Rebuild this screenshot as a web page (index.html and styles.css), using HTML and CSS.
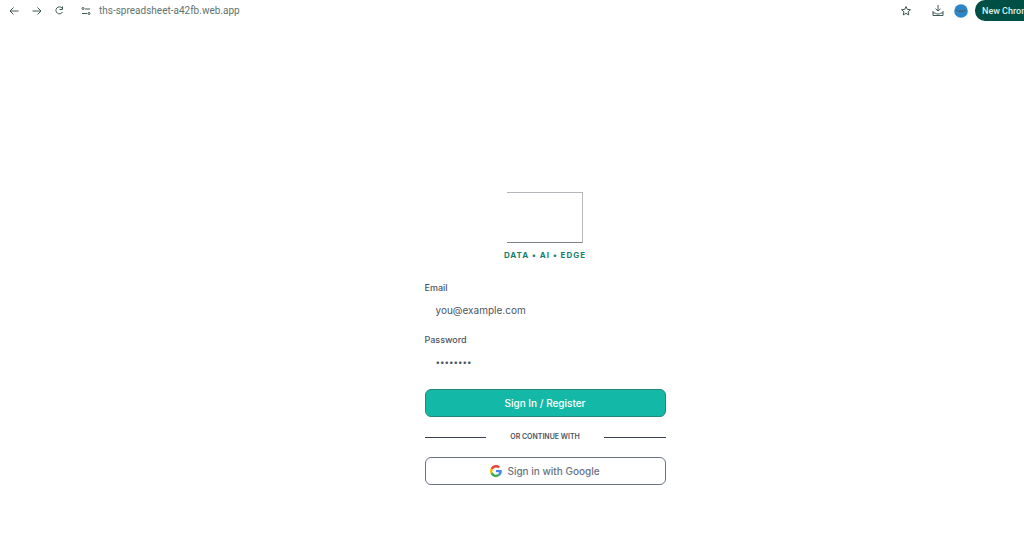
FILE: index.html
```html
<!DOCTYPE html>
<html lang="en">
<head>
    <meta charset="UTF-8">
    <meta name="viewport" content="width=device-width, initial-scale=1.0">
    <title>Sign In</title>
    <link rel="stylesheet" href="styles.css">
</head>
<body>
    <header class="toolbar">
        <div class="nav-buttons">
            <button type="button" class="icon-btn" aria-label="Back">
                <svg viewBox="0 0 12 12"><path d="M10.5 6H2M5.5 2.5L2 6l3.5 3.5"/></svg>
            </button>
            <button type="button" class="icon-btn" aria-label="Forward">
                <svg viewBox="0 0 12 12"><path d="M1.5 6H10M6.5 2.5L10 6l-3.5 3.5"/></svg>
            </button>
            <button type="button" class="icon-btn" aria-label="Reload">
                <svg viewBox="0 0 12 12"><path d="M8 3A3.500 3.500 0 1 0 8.500 7M8.500 1.500v3H5.500"/></svg>
            </button>
        </div>
        <div class="address-bar">
            <button type="button" class="icon-btn" aria-label="Site information">
                <svg viewBox="0 0 12 12"><path d="M5 4h5M2 8.500h5"/><circle cx="3" cy="3.500" r="1"/><circle cx="9" cy="8.500" r="1"/></svg>
            </button>
            <input type="text" class="url" aria-label="Address" value="ths-spreadsheet-a42fb.web.app">
        </div>
        <div class="toolbar-actions">
            <button type="button" class="icon-btn" aria-label="Bookmark">
                <svg viewBox="0 0 12 12"><path d="M6 1.500l1.300 2.900 3.200.3-2.400 2.100.7 3.200L6 8.300 3.200 10l.7-3.200-2.400-2.100 3.200-.3z"/></svg>
            </button>
            <button type="button" class="icon-btn" aria-label="Downloads">
                <svg viewBox="0 0 12 12"><path d="M6 0v6M3.500 3.700L6 6l2.500-2.300M1 6v4.500h10V6M1 8h2.500l1 1h3l1-1H11"/></svg>
            </button>
            <button type="button" class="avatar" aria-label="Profile">
                <svg viewBox="0 0 14 14"><circle cx="7" cy="7" r="6.800" fill="#2b86c9"/><path d="M2 6.500h2M5 6.500h2M8 6.500h1M10 6.500h2M4 7.500h6" stroke="#4b6172"/></svg>
            </button>
            <button type="button" class="update-btn">New Chrome</button>
        </div>
    </header>

    <main class="page">
        <div class="login">
            <div class="logo"></div>
            <p class="tagline">DATA • AI • EDGE</p>

            <form class="login-form">
                <label for="email">Email</label>
                <input type="email" id="email" placeholder="you@example.com">

                <label for="password">Password</label>
                <input type="password" id="password" placeholder="••••••••">

                <button type="submit" class="btn btn-primary">Sign In / Register</button>
            </form>

            <div class="divider"><span>OR CONTINUE WITH</span></div>

            <button type="button" class="btn btn-google">
                <svg class="google-icon" viewBox="0 0 48 48">
                    <path fill="#EA4335" d="M24 9.5c3.5 0 6.7 1.2 9.2 3.6l6.9-6.9C35.9 2.4 30.5 0 24 0 14.6 0 6.5 5.4 2.6 13.2l8 6.2C12.4 13.7 17.7 9.5 24 9.5z"/>
                    <path fill="#4285F4" d="M47 24.6c0-1.6-.2-3.1-.4-4.6H24v9h12.9c-.6 3-2.3 5.5-4.8 7.2l7.7 6C44.4 38 47 31.8 47 24.6z"/>
                    <path fill="#FBBC05" d="M10.5 28.6c-.5-1.5-.8-3-.8-4.6s.3-3.1.8-4.6l-7.9-6.2C.9 16.5 0 20.1 0 24s.9 7.5 2.6 10.8z"/>
                    <path fill="#34A853" d="M24 48c6.5 0 11.9-2.1 15.9-5.8l-7.7-6c-2.2 1.5-4.9 2.3-8.200 2.300-6.300 0-11.600-4.200-13.500-9.900l-7.900 6.200C6.500 42.600 14.600 48 24 48z"/>
                </svg>
                Sign in with Google
            </button>
        </div>
    </main>
</body>
</html>
```
FILE: styles.css
```css
:root {
    --primary-color: #14b8a6;
    --toolbar-color: #3f5853;
    --text-color: #4b5563;
    --line-color: #374151;
}

* {
    box-sizing: border-box;
}

body {
    font-family: Inter, "Liberation Sans", sans-serif;
    background: #fff;
    color: var(--text-color);
    margin: 0;
    overflow-x: hidden;
}

button,
input {
    font-family: inherit;
    border: none;
    background: none;
    padding: 0;
}

button {
    cursor: pointer;
}

.toolbar {
    display: flex;
    align-items: center;
    height: 21px;
    padding-left: 8px;
    overflow: hidden;
}

.nav-buttons {
    display: flex;
    gap: 11px;
}

.icon-btn {
    width: 12px;
    height: 12px;
    flex: none;
}

.icon-btn svg,
.avatar svg {
    display: block;
    width: 100%;
    height: 100%;
    fill: none;
    stroke: var(--toolbar-color);
}

.address-bar {
    display: flex;
    align-items: center;
    flex: 1;
    gap: 7px;
    margin-left: 14px;
}

.url {
    flex: 1;
    min-width: 0;
    font-family: Roboto, "Liberation Sans", sans-serif;
    font-size: 10px;
    color: #60736f;
}

.toolbar-actions {
    display: flex;
    align-items: center;
}

.toolbar-actions .icon-btn {
    margin-right: 20px;
}

.toolbar-actions .icon-btn + .icon-btn {
    margin-right: 10px;
}

.avatar {
    width: 14px;
    height: 14px;
}

.avatar svg {
    stroke: none;
}

.update-btn {
    width: 49px;
    height: 21px;
    margin-left: 7px;
    padding-left: 7px;
    border-radius: 10px 0 0 10px;
    background: #004f44;
    color: #d9efe9;
    font-family: Roboto, "Liberation Sans", sans-serif;
    font-size: 9px;
    font-weight: 500;
    text-align: left;
    white-space: nowrap;
    overflow: hidden;
}

.page {
    display: flex;
    justify-content: center;
    padding: 171px 0 40px 66px;
}

.login {
    width: 241px;
}

.logo {
    width: 76px;
    height: 51px;
    margin: 0 auto;
    border: 1px solid #b4b8bc;
    border-left: none;
    border-bottom-color: #7b8388;
}

.tagline {
    margin: 6px 0 20px;
    font-size: 8px;
    line-height: 12px;
    font-weight: 700;
    letter-spacing: 1px;
    text-align: center;
    color: #15806f;
}

.login-form {
    display: flex;
    flex-direction: column;
}

.login-form label {
    font-size: 9px;
    line-height: 14px;
    font-weight: 500;
}

.login-form input {
    height: 26px;
    margin: 2px 0 10px;
    padding: 0 11px;
    font-size: 10px;
    color: var(--text-color);
}

.login-form input::placeholder {
    color: var(--text-color);
}

.login-form input[type="password"] {
    font-size: 8px;
}

.btn {
    display: flex;
    align-items: center;
    justify-content: center;
    width: 100%;
    height: 28px;
    border-radius: 6px;
    font-size: 10px;
    font-weight: 500;
}

.btn-primary {
    margin-top: 4px;
    border: 1px solid #24877e;
    background: var(--primary-color);
    color: #fff;
}

.divider {
    display: flex;
    align-items: center;
    gap: 24px;
    margin: 14px 0;
    font-size: 7px;
    line-height: 12px;
    font-weight: 600;
}

.divider::before,
.divider::after {
    content: "";
    flex: 1;
    height: 1px;
    background: var(--line-color);
}

.btn-google {
    gap: 5px;
    border: 1px solid #6b7280;
    color: #6b7280;
}

.google-icon {
    width: 12px;
    height: 12px;
}
```
